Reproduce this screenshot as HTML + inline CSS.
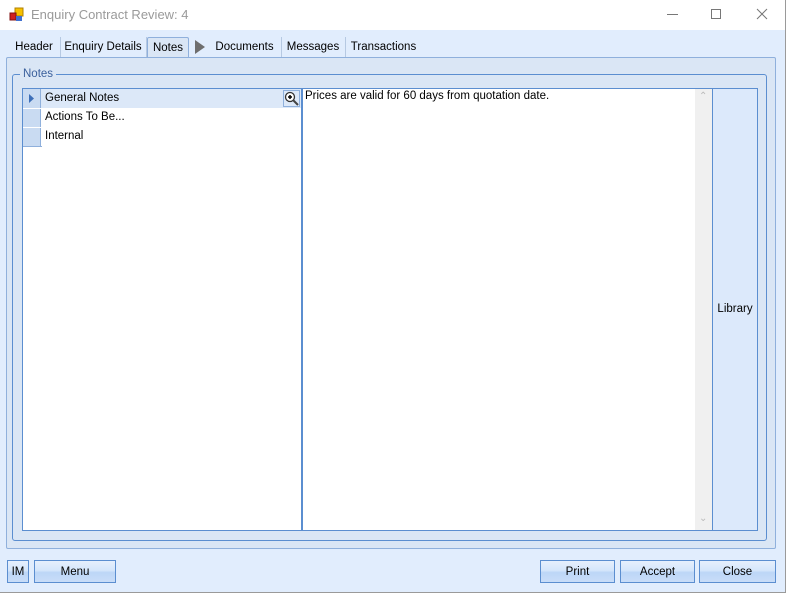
<!DOCTYPE html><html><head><style>
body{margin:0;width:786px;height:593px;overflow:hidden;font-family:"Liberation Sans",sans-serif;font-size:11.5px;background:#e1edfd;position:relative}
.a{position:absolute;box-sizing:border-box}
.btn{position:absolute;box-sizing:border-box;border:1px solid #5b8ed0;background:linear-gradient(#e6f0fd 0%,#d5e6fb 45%,#bcd6f7 55%,#c9ddf8 100%);text-align:center;line-height:22px;font-size:11.5px;color:#000}
.tab{position:absolute;top:37px;height:20px;line-height:20px;font-size:11.5px;border-right:1px solid #b6c9e2}
</style></head><body>
<div class="a" style="left:0;top:0;width:786px;height:30px;background:#fff"></div>
<div class="a" style="left:785px;top:0;width:1px;height:593px;background:#9a9a9a"></div>
<div class="a" style="left:0;top:592px;width:786px;height:1px;background:#9a9a9a"></div>
<svg class="a" style="left:9px;top:7px" width="16" height="15"><rect x="6" y="1" width="8" height="8" fill="#f6c000" stroke="#b08000"/><rect x="1" y="6" width="6" height="7" fill="#d02020" stroke="#801010"/><rect x="7" y="9" width="6" height="5" fill="#4070d0"/></svg>
<div class="a" style="left:31px;top:7px;font-size:13px;color:#9a9a9a">Enquiry Contract Review: 4</div>
<div class="a" style="left:667px;top:14px;width:11px;height:1px;background:#777"></div>
<div class="a" style="left:711px;top:9px;width:10px;height:10px;border:1px solid #777"></div>
<svg class="a" style="left:756px;top:8px" width="12" height="12"><path d="M1 1L11 11M11 1L1 11" stroke="#777" stroke-width="1"/></svg>
<div class="tab" style="left:8px;width:52px;text-align:center">Header</div>
<div class="tab" style="left:60px;width:86px;text-align:center">Enquiry Details</div>
<div class="a" style="left:147px;top:37px;width:42px;height:22px;background:#dae6f5;border:1px solid #8fb0dc;border-bottom:none;border-radius:2px 2px 0 0;text-align:center;line-height:21px">Notes</div>
<svg class="a" style="left:194px;top:40px" width="12" height="14"><path d="M1 0L11 7L1 14Z" fill="#6e6e6e"/></svg>
<div class="tab" style="left:208px;width:73px;text-align:center">Documents</div>
<div class="tab" style="left:281px;width:64px;text-align:center">Messages</div>
<div class="tab" style="left:345px;width:77px;text-align:center;border:none">Transactions</div>
<div class="a" style="left:6px;top:57px;width:770px;height:492px;background:#dae6f5;border:1px solid #8fb0dc;border-radius:2px"></div>
<div class="a" style="left:12px;top:74px;width:755px;height:467px;border:1px solid #5b8ed0;border-radius:3px"></div>
<div class="a" style="left:20px;top:68px;background:#dae6f5;padding:0 3px;color:#3a5f9c">Notes</div>
<div class="a" style="left:22px;top:88px;width:736px;height:443px;background:#fff;border:1px solid #5b8ed0"></div>
<div class="a" style="left:23px;top:89px;width:278px;height:19px;background:#dce8f8"></div>
<div class="a" style="left:23px;top:89px;width:18px;height:57px;background:#c9dbf2;border-right:1px solid #8fb0dc"></div>
<div class="a" style="left:23px;top:108px;width:18px;height:1px;background:#fff"></div>
<div class="a" style="left:23px;top:127px;width:18px;height:1px;background:#fff"></div>
<div class="a" style="left:23px;top:146px;width:19px;height:1px;background:#8fb0dc"></div>
<svg class="a" style="left:29px;top:94px" width="6" height="9"><path d="M0 0L5 4.5L0 9Z" fill="#3d6fb8"/></svg>
<div class="a" style="left:45px;top:92px">General Notes</div>
<div class="a" style="left:45px;top:111px">Actions To Be...</div>
<div class="a" style="left:45px;top:130px">Internal</div>
<svg class="a" style="left:283px;top:90px" width="17" height="17"><rect x="0.5" y="0.5" width="16" height="16" fill="#dce8f8" stroke="#8fb0dc"/><circle cx="7" cy="7" r="4.5" fill="#fff" stroke="#333" stroke-width="1.3"/><path d="M5 7H9M7 5V9" stroke="#000" stroke-width="1.5"/><path d="M10 10L15 15" stroke="#444" stroke-width="2"/></svg>
<div class="a" style="left:301px;top:89px;width:2px;height:441px;background:#5b8ed0"></div>
<div class="a" style="left:305px;top:90px">Prices are valid for 60 days from quotation date.</div>
<div class="a" style="left:695px;top:89px;width:17px;height:441px;background:#f0f0f0"></div>
<div class="a" style="left:699px;top:91px;color:#bbb;font-size:10px">&#8963;</div>
<div class="a" style="left:699px;top:513px;color:#bbb;font-size:10px">&#8964;</div>
<div class="a" style="left:712px;top:89px;width:45px;height:441px;background:#dce9fb;border-left:1px solid #5b8ed0;text-align:center;line-height:441px">Library</div>
<div class="btn" style="left:7px;top:560px;width:22px;height:23px">IM</div>
<div class="btn" style="left:34px;top:560px;width:82px;height:23px">Menu</div>
<div class="btn" style="left:540px;top:560px;width:75px;height:23px">Print</div>
<div class="btn" style="left:620px;top:560px;width:75px;height:23px">Accept</div>
<div class="btn" style="left:699px;top:560px;width:77px;height:23px">Close</div>
</body></html>
